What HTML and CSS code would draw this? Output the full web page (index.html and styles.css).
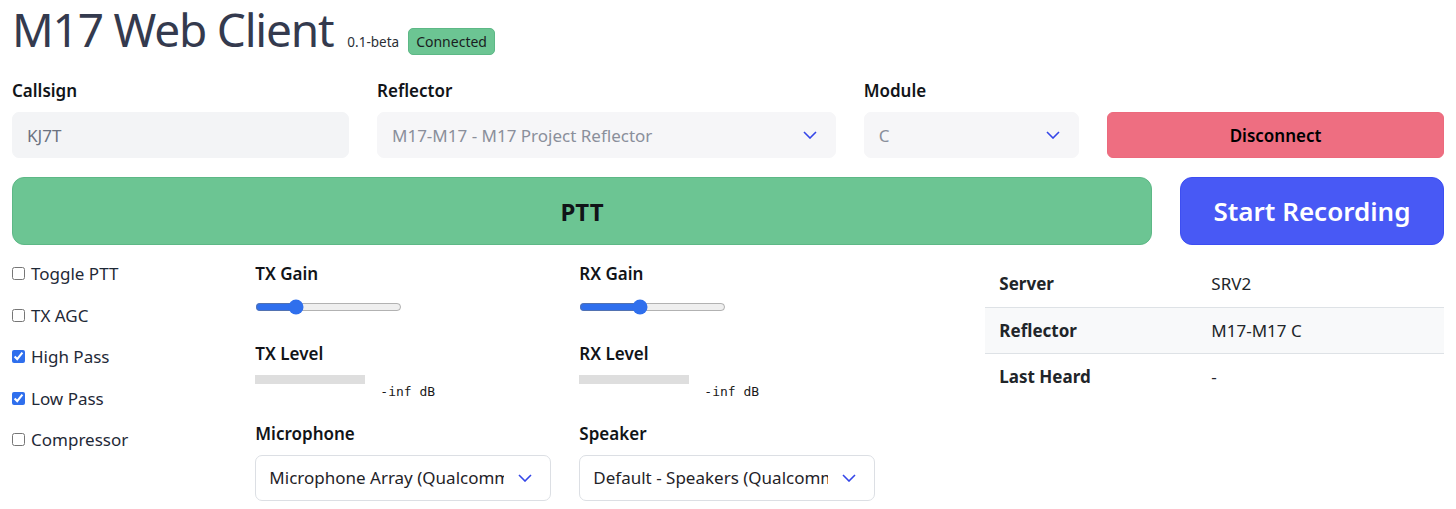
FILE: index.html
```html
<!DOCTYPE html>
<html>
<head>
  <title>M17 Web Client</title>
  <link rel="stylesheet" href="styles.css">
</head>
<body>
  <div id="mainContainer">
    <div class="titleBar">
      <h1>M17 Web Client</h1>
      <span class="version">0.1-beta</span>
      <span class="statusBadge">Connected</span>
    </div>

    <div class="connectRow">
      <div class="field callsignField">
        <label for="callsign" class="fieldLabel">Callsign</label>
        <input type="text" id="callsign" class="textInput" value="KJ7T" disabled>
      </div>

      <div class="field reflectorField">
        <label for="reflector" class="fieldLabel">Reflector</label>
        <div class="selectWrap">
          <select id="reflector" class="formSelect" disabled>
            <option>M17-M17 - M17 Project Reflector</option>
          </select>
          <svg class="chevron" width="14" height="8" viewBox="0 0 14 8"><polyline points="1,1 7,7 13,1" fill="none" stroke="#3446e8" stroke-width="1.6"/></svg>
        </div>
      </div>

      <div class="field moduleField">
        <label for="module" class="fieldLabel">Module</label>
        <div class="selectWrap">
          <select id="module" class="formSelect" disabled>
            <option>C</option>
          </select>
          <svg class="chevron" width="14" height="8" viewBox="0 0 14 8"><polyline points="1,1 7,7 13,1" fill="none" stroke="#3446e8" stroke-width="1.6"/></svg>
        </div>
      </div>

      <div class="field disconnectField">
        <button type="button" class="disconnectButton">Disconnect</button>
      </div>
    </div>

    <div class="pttRow">
      <button type="button" class="pttButton">PTT</button>
      <button type="button" class="recordButton">Start Recording</button>
    </div>

    <div class="controlRow">
      <div class="optionList">
        <label class="option"><input type="checkbox"> Toggle PTT</label>
        <label class="option"><input type="checkbox"> TX AGC</label>
        <label class="option"><input type="checkbox" checked> High Pass</label>
        <label class="option"><input type="checkbox" checked> Low Pass</label>
        <label class="option"><input type="checkbox"> Compressor</label>
      </div>

      <div class="audioGrid">
        <div class="audioCol">
          <label class="fieldLabel">TX Gain</label>
          <input type="range" class="gainSlider" min="0" max="2" step="0.1" value="0.5">
          <label class="fieldLabel">TX Level</label>
          <div class="levelRow">
            <div class="levelBar"></div>
            <span class="levelText">-inf dB</span>
          </div>
          <label for="microphone" class="fieldLabel">Microphone</label>
          <div class="selectWrap deviceWrap">
            <select id="microphone" class="formSelect deviceSelect">
              <option>Microphone Array (Qualcomm(R) Aqstic(TM) Audio)</option>
            </select>
            <svg class="chevron" width="14" height="8" viewBox="0 0 14 8"><polyline points="1,1 7,7 13,1" fill="none" stroke="#3446e8" stroke-width="1.6"/></svg>
          </div>
        </div>

        <div class="audioCol">
          <label class="fieldLabel">RX Gain</label>
          <input type="range" class="gainSlider" min="0" max="2" step="0.1" value="0.8">
          <label class="fieldLabel">RX Level</label>
          <div class="levelRow">
            <div class="levelBar"></div>
            <span class="levelText">-inf dB</span>
          </div>
          <label for="speaker" class="fieldLabel">Speaker</label>
          <div class="selectWrap deviceWrap">
            <select id="speaker" class="formSelect deviceSelect">
              <option>Default - Speakers (Qualcomm(R) Aqstic(TM) Audio)</option>
            </select>
            <svg class="chevron" width="14" height="8" viewBox="0 0 14 8"><polyline points="1,1 7,7 13,1" fill="none" stroke="#3446e8" stroke-width="1.6"/></svg>
          </div>
        </div>
      </div>

      <table class="statusTable">
        <tr>
          <th>Server</th>
          <td>SRV2</td>
        </tr>
        <tr>
          <th>Reflector</th>
          <td>M17-M17 C</td>
        </tr>
        <tr>
          <th>Last Heard</th>
          <td>-</td>
        </tr>
      </table>
    </div>
  </div>
</body>
</html>
```

FILE: styles.css
```css
body {
  margin: 0;
  padding: 0;
  background-color: #ffffff;
  color: #1f2328;
  font-family: "Noto Sans", "Open Sans", sans-serif;
  font-size: 17px;
  line-height: 1.5;
}

#mainContainer {
  padding: 0 12px;
}

.titleBar {
  display: flex;
  align-items: baseline;
  padding-top: 1px;
  height: 57px;
}

.titleBar h1 {
  margin: 0;
  font-size: 46px;
  font-weight: 400;
  line-height: 57px;
  letter-spacing: -1.2px;
  color: #343a4e;
}

.version {
  margin-left: 14px;
  font-size: 13.5px;
  color: #2b2f36;
}

.statusBadge {
  margin-left: 9px;
  padding: 4px 7px;
  font-size: 14px;
  line-height: 17px;
  color: #1a1d21;
  background-color: #6cc593;
  border: 1px solid #5db886;
  border-radius: 5px;
}

.connectRow {
  display: grid;
  grid-template-columns: repeat(12, 1fr);
  column-gap: 28px;
  margin-top: 20px;
}

.callsignField { grid-column: span 3; }
.reflectorField { grid-column: span 4; }
.moduleField { grid-column: span 2; }

.disconnectField {
  grid-column: span 3;
  display: flex;
  align-items: flex-end;
}

.fieldLabel {
  display: block;
  font-weight: 600;
  line-height: 25.5px;
  margin-bottom: 8.5px;
  color: #111418;
}

.textInput,
.formSelect {
  box-sizing: border-box;
  width: 100%;
  height: 46px;
  margin: 0;
  padding: 0 14px;
  font-family: inherit;
  font-size: 17px;
  border: 1px solid #f3f4f6;
  border-radius: 7px;
  background-color: #f3f4f6;
  color: #6b7280;
  opacity: 1;
}

.formSelect {
  appearance: none;
  padding-right: 44px;
  background-color: #f6f6f8;
  border-color: #f6f6f8;
  color: #8a8f9b;
}

.selectWrap {
  position: relative;
}

.chevron {
  position: absolute;
  right: 19px;
  top: 19px;
  pointer-events: none;
}

.disconnectButton {
  width: 100%;
  height: 46px;
  font-family: inherit;
  font-size: 17px;
  font-weight: 600;
  color: #000000;
  background-color: #ee6e81;
  border: 1px solid #ec6a7d;
  border-radius: 6px;
  cursor: pointer;
}

.pttRow {
  display: flex;
  gap: 28px;
  margin-top: 19px;
}

.pttButton {
  flex: 1;
  height: 68px;
  font-family: inherit;
  font-size: 24px;
  font-weight: 700;
  color: #111418;
  background-color: #6cc593;
  border: 1px solid #5db886;
  border-radius: 12px;
  cursor: pointer;
}

.recordButton {
  width: 264px;
  height: 68px;
  font-family: inherit;
  font-size: 26px;
  font-weight: 600;
  color: #ffffff;
  background-color: #4859f5;
  border: 1px solid #3d4ef2;
  border-radius: 12px;
  cursor: pointer;
}

.controlRow {
  display: grid;
  grid-template-columns: repeat(12, 1fr);
  column-gap: 28px;
  margin-top: 16px;
  align-items: start;
}

.optionList {
  grid-column: span 2;
  display: flex;
  flex-direction: column;
  gap: 16px;
}

.option {
  display: flex;
  align-items: center;
  line-height: 25.5px;
  color: #1f2937;
}

.option input {
  width: 13px;
  height: 13px;
  margin: 0 6px 0 0;
  accent-color: #2f6fed;
}

.audioGrid {
  grid-column: span 6;
  display: grid;
  grid-template-columns: 296px 296px;
  column-gap: 28px;
}

/* label margin collapses into the slider's top margin */
.gainSlider {
  display: block;
  width: 147px;
  height: 16px;
  margin: 12.5px 0 25.5px;
  accent-color: #2f6fed;
}

.levelRow {
  display: flex;
  align-items: flex-start;
  margin-bottom: 21px;
}

.levelBar {
  width: 110px;
  height: 9px;
  background-color: #dedede;
}

.levelText {
  margin: 9px 0 0 15px;
  font-family: "DejaVu Sans Mono", "Liberation Mono", monospace;
  font-size: 13px;
  line-height: 16px;
  color: #1a1a1a;
}

.deviceWrap {
  margin-top: 2px;
}

.deviceSelect {
  padding-left: 13px;
  padding-right: 46px;
  background-color: #ffffff;
  border-color: #dcdfe4;
  color: #1f2328;
}

.statusTable {
  grid-column: span 4;
  width: 100%;
  border-collapse: collapse;
}

.statusTable th,
.statusTable td {
  padding: 10px 14px;
  line-height: 25.5px;
  text-align: left;
  color: #212529;
}

.statusTable th {
  width: 184px;
  font-weight: 700;
}

.statusTable tr + tr th,
.statusTable tr + tr td {
  border-top: 1px solid #dee2e6;
}

.statusTable tr:nth-child(2) {
  background-color: #f8f9fa;
}
```
